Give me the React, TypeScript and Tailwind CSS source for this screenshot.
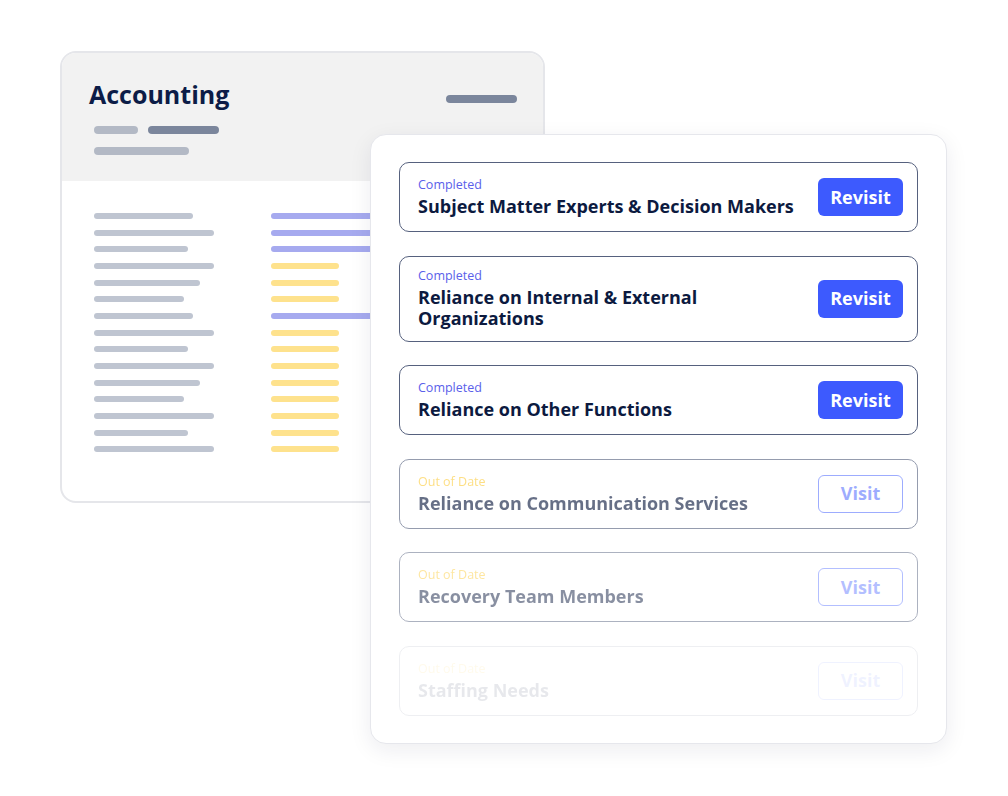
const leftLines = [99, 120, 94, 120, 106, 90, 99, 120, 94, 120, 106, 90, 120, 94, 120];
const rightLines = ["p", "p", "p", "y", "y", "y", "p", "y", "y", "y", "y", "y", "y", "y", "y"];

type Step = {
  status: "done" | "stale";
  title: string;
  fade: string;
};

const steps: Step[] = [
  { status: "done", title: "Subject Matter Experts & Decision Makers", fade: "opacity-100" },
  { status: "done", title: "Reliance on Internal & External Organizations", fade: "opacity-100" },
  { status: "done", title: "Reliance on Other Functions", fade: "opacity-100" },
  { status: "stale", title: "Reliance on Communication Services", fade: "opacity-[0.63]" },
  { status: "stale", title: "Recovery Team Members", fade: "opacity-[0.49]" },
  { status: "stale", title: "Staffing Needs", fade: "opacity-[0.1]" },
];

function AccountingCard() {
  return (
    <div className="ml-[60px] mt-[51px] w-[485px] h-[452px] rounded-[16px] border-2 border-[#e5e6ea] bg-white overflow-hidden">
      <div className="bg-[#f2f2f2] h-[128px] pt-[26px] pl-[27px] pr-[26px]">
        <div className="flex justify-between items-start">
          <h2 className="text-[25px] leading-[31px] font-bold text-[#0c1c47]">Accounting</h2>
          <div className="mt-[16px] w-[71px] h-2 rounded-full bg-[#7b869c]" />
        </div>
        <div className="ml-[5px] mt-[16px] flex gap-[10px]">
          <div className="w-[44px] h-2 rounded-full bg-[#b3b9c5]" />
          <div className="w-[71px] h-2 rounded-full bg-[#7b869c]" />
        </div>
        <div className="ml-[5px] mt-[13px] w-[95px] h-2 rounded-full bg-[#b3b9c5]" />
      </div>
      <div className="pt-[32px] pl-[32px] flex gap-[57px]">
        <div className="flex flex-col gap-[10.67px] w-[120px]">
          {leftLines.map((w, i) => (
            <div key={i} className="h-[6px] rounded-full bg-[#bfc5d1]" style={{ width: w }} />
          ))}
        </div>
        <div className="flex flex-col gap-[10.67px]">
          {rightLines.map((c, i) =>
            c === "p" ? (
              <div key={i} className="h-[6px] w-[130px] rounded-full bg-[#a6aaef]" />
            ) : (
              <div key={i} className="h-[6px] w-[68px] rounded-full bg-[#fee28d]" />
            )
          )}
        </div>
      </div>
    </div>
  );
}

function StepRow({ step }: { step: Step }) {
  const done = step.status === "done";
  return (
    <div
      className={`${step.fade} min-h-[70px] rounded-[10px] border border-[#56617e] pl-[18px] pr-[14px] py-[11px] flex items-center gap-4`}
    >
      <div className="flex-1">
        <p className={`text-[12.5px] leading-[16px] mb-[3px] ${done ? "text-[#5a60ea]" : "text-[#fccc3d]"}`}>
          {done ? "Completed" : "Out of Date"}
        </p>
        <p className="text-[18px] leading-[21.7px] font-bold text-[#0c1a3f] pr-2">{step.title}</p>
      </div>
      {done ? (
        <button className="w-[85px] h-[38px] rounded-[6px] bg-[#3d5afe] text-white text-[18px] font-bold">
          Revisit
        </button>
      ) : (
        <button className="w-[85px] h-[38px] rounded-[6px] border border-[#3d5afe] bg-white text-[#3d5afe] text-[18px] font-bold opacity-80">
          Visit
        </button>
      )}
    </div>
  );
}

export default function App() {
  return (
    <div
      className="relative w-[1008px] h-[796px] bg-white overflow-hidden"
      style={{ fontFamily: '"Open Sans", "Noto Sans", sans-serif' }}
    >
      <AccountingCard />
      <div className="absolute left-[370px] top-[134px] w-[577px] rounded-[16px] border border-[#e6e7ec] bg-white px-[28px] py-[27px] flex flex-col gap-[23.5px] shadow-[0_6px_22px_rgba(20,30,60,0.08)]">
        {steps.map((s) => (
          <StepRow key={s.title} step={s} />
        ))}
      </div>
    </div>
  );
}
